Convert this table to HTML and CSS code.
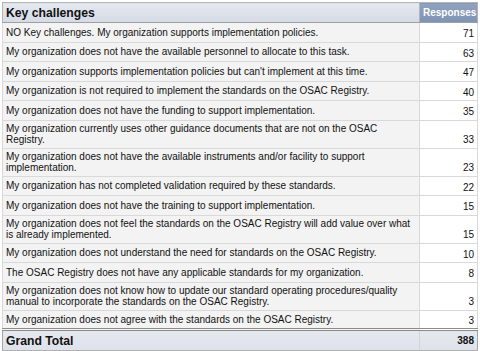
FILE: index.html
```html
<!DOCTYPE html>
<html>
<head>
<meta charset="utf-8">
<link rel="stylesheet" href="styles.css">
</head>
<body>
<table class="pivot">
  <thead>
    <tr class="head">
      <th class="h-label">Key challenges</th>
      <th class="h-num">Responses</th>
    </tr>
  </thead>
  <tbody>
    <tr><td class="lbl">NO Key challenges. My organization supports implementation policies.</td><td class="num">71</td></tr>
    <tr><td class="lbl">My organization does not have the available personnel to allocate to this task.</td><td class="num">63</td></tr>
    <tr><td class="lbl">My organization supports implementation policies but can't implement at this time.</td><td class="num">47</td></tr>
    <tr><td class="lbl">My organization is not required to implement the standards on the OSAC Registry.</td><td class="num">40</td></tr>
    <tr><td class="lbl">My organization does not have the funding to support implementation.</td><td class="num">35</td></tr>
    <tr class="dbl"><td class="lbl">My organization currently uses other guidance documents that are not on the OSAC Registry.</td><td class="num">33</td></tr>
    <tr class="dbl"><td class="lbl">My organization does not have the available instruments and/or facility to support implementation.</td><td class="num">23</td></tr>
    <tr><td class="lbl">My organization has not completed validation required by these standards.</td><td class="num">22</td></tr>
    <tr><td class="lbl">My organization does not have the training to support implementation.</td><td class="num">15</td></tr>
    <tr class="dbl"><td class="lbl">My organization does not feel the standards on the OSAC Registry will add value over what is already implemented.</td><td class="num">15</td></tr>
    <tr><td class="lbl">My organization does not understand the need for standards on the OSAC Registry.</td><td class="num">10</td></tr>
    <tr><td class="lbl">The OSAC Registry does not have any applicable standards for my organization.</td><td class="num">8</td></tr>
    <tr class="dbl"><td class="lbl">My organization does not know how to update our standard operating procedures/quality manual to incorporate the standards on the OSAC Registry.</td><td class="num">3</td></tr>
    <tr><td class="lbl">My organization does not agree with the standards on the OSAC Registry.</td><td class="num">3</td></tr>
  </tbody>
  <tfoot>
    <tr class="total">
      <td class="t-label">Grand Total</td>
      <td class="t-num">388</td>
    </tr>
  </tfoot>
</table>
</body>
</html>
```

FILE: styles.css
```css
html, body {
  margin: 0;
  padding: 0;
  background: #ffffff;
}
body {
  padding: 2px 0 0 2px;
  font-family: "Liberation Sans", Arial, sans-serif;
  color: #111;
}
.pivot {
  border-collapse: collapse;
  width: 476px;
  table-layout: fixed;
  border: 1px solid #a6a6a6;
}
.pivot th, .pivot td {
  box-sizing: border-box;
}
.h-num { width: 58px; }
.head th {
  height: 20px;
  padding: 0 3px;
  border: 1px solid #b4b4b4;
  border-bottom: 1px solid #a0a0a0;
}
.h-label {
  text-align: left;
  font-size: 12.2px;
  font-weight: bold;
  color: #111;
  background: linear-gradient(#e4e8ef, #d5dbe6);
}
.h-num {
  text-align: right;
  font-size: 10px;
  font-weight: bold;
  color: #fff;
  background: linear-gradient(#90a3bf, #7e93b3);
}
tbody td {
  font-size: 10px;
  line-height: 11.5px;
  height: 19.5px;
  padding: 2px 3px 2px 3px;
  border: 1px solid #d9d9d9;
}
tbody tr.dbl td {
  height: 27.5px;
}
.lbl {
  background: #f3f3f3;
  vertical-align: middle;
}
.num {
  background: #ffffff;
  text-align: right;
  vertical-align: bottom;
  padding-bottom: 2px;
}
.total td {
  height: 21px;
  padding: 0 3px;
  border-top: 3px double #8c8c8c;
  border-bottom: 1px solid #b0b0b0;
  background: linear-gradient(#e6e9ef, #dde1e9);
  font-weight: bold;
}
.t-label {
  font-size: 12.2px;
  border-right: 1px solid #cfd3da;
}
.t-num {
  text-align: right;
  font-size: 10px;
}
```
